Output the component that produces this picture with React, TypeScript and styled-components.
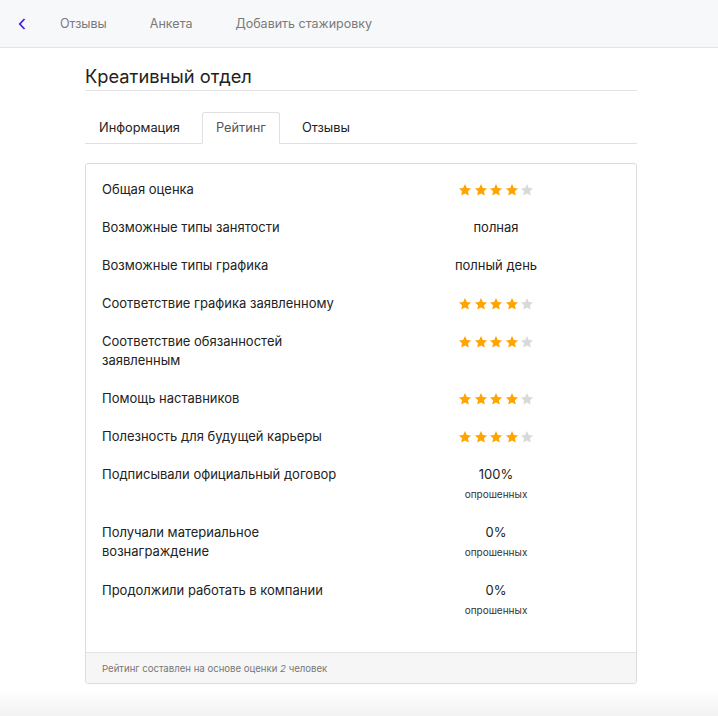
import React from "react";
import styled, { createGlobalStyle } from "styled-components";

const Global = createGlobalStyle`
  html, body { margin: 0; padding: 0; background: #fff; }
  body { font-family: Inter, "Noto Sans", sans-serif; color: #222; }
`;

const Page = styled.div`
  min-height: 716px;
  display: flex;
  flex-direction: column;
  background: linear-gradient(to bottom, #fff 0, #fff 690px, #f2f2f2 716px);
`;

const TopBar = styled.nav`
  height: 48px;
  background: #f7f8fa;
  border-bottom: 1px solid #e1e4ea;
  display: flex;
  align-items: center;
  padding-left: 16px;
  box-sizing: border-box;
`;

const BackButton = styled.button`
  border: 0;
  background: none;
  padding: 0;
  width: 12px;
  height: 16px;
  display: flex;
  align-items: center;
  justify-content: center;
  margin-right: 32px;
  cursor: pointer;
`;

const NavLink = styled.a`
  font-size: 12.5px;
  color: #7a7a7a;
  text-decoration: none;
  margin-right: 43px;
`;

const Main = styled.main`
  width: 552px;
  margin: 0 0 0 85px;
  padding-top: 16px;
`;

const Title = styled.h1`
  margin: 0;
  font-size: 18.3px;
  font-weight: 400;
  line-height: 24px;
  color: #222;
  padding-bottom: 2px;
  border-bottom: 1px solid #e3e3e3;
`;

const Tabs = styled.div`
  display: flex;
  margin-top: 21px;
  border-bottom: 1px solid #e0e0e0;
`;

const Tab = styled.div<{ $active?: boolean }>`
  font-size: 12.8px;
  line-height: 16px;
  padding: 8px 13px;
  height: 32px;
  box-sizing: border-box;
  margin-bottom: -1px;
  margin-right: 8px;
  border: 1px solid ${(p) => (p.$active ? "#e0e0e0" : "transparent")};
  border-bottom-color: ${(p) => (p.$active ? "#fff" : "transparent")};
  border-radius: 3px 3px 0 0;
  background: ${(p) => (p.$active ? "#fff" : "transparent")};
  color: ${(p) => (p.$active ? "#555" : "#222")};
  display: flex;
  align-items: center;
`;

const Card = styled.section`
  margin-top: 19px;
  border: 1px solid #dcdcdc;
  border-radius: 3px;
  overflow: hidden;
`;

const CardBody = styled.div`
  padding: 16px 16px 14px;
  display: grid;
  grid-template-columns: 244px 1fr;
  column-gap: 26px;
  row-gap: 19px;
`;

const Label = styled.div`
  font-size: 13px;
  line-height: 19px;
  color: #222;
`;

const Value = styled.div`
  font-size: 13px;
  line-height: 19px;
  color: #222;
  text-align: center;
  display: flex;
  flex-direction: column;
  align-items: center;
`;

const Sub = styled.span`
  font-size: 10px;
  line-height: 19px;
  padding-top: 1px;
  color: #333;
`;

const Stars = styled.div`
  display: flex;
  gap: 1.5px;
  height: 19px;
  align-items: center;
`;

const CardFooter = styled.footer`
  margin-top: 18px;
  background: #f6f6f6;
  border-top: 1px solid #e3e3e3;
  height: 30px;
  display: flex;
  align-items: center;
  padding-left: 16px;
  font-size: 9.6px;
  color: #777;
`;

const Star = ({ filled }: { filled: boolean }) => (
  <svg width="14" height="14" viewBox="0 0 24 24">
    <path
      d="M12 1.8l3.1 6.7 7.3.8-5.4 5 1.5 7.2L12 17.9l-6.5 3.6L7 14.3l-5.4-5 7.3-.8z"
      fill={filled ? "#ffa400" : "#d9d9d9"}
    />
  </svg>
);

const Rating = ({ value }: { value: number }) => (
  <Stars>
    {[1, 2, 3, 4, 5].map((i) => (
      <Star key={i} filled={i <= value} />
    ))}
  </Stars>
);

type Row = { label: string; stars?: number; text?: string; sub?: string };

const rows: Row[] = [
  { label: "Общая оценка", stars: 4 },
  { label: "Возможные типы занятости", text: "полная" },
  { label: "Возможные типы графика", text: "полный день" },
  { label: "Соответствие графика заявленному", stars: 4 },
  { label: "Соответствие обязанностей заявленным", stars: 4 },
  { label: "Помощь наставников", stars: 4 },
  { label: "Полезность для будущей карьеры", stars: 4 },
  { label: "Подписывали официальный договор", text: "100%", sub: "опрошенных" },
  { label: "Получали материальное вознаграждение", text: "0%", sub: "опрошенных" },
  { label: "Продолжили работать в компании", text: "0%", sub: "опрошенных" },
];

export default function App() {
  return (
    <Page>
      <Global />
      <TopBar>
        <BackButton aria-label="Назад">
          <svg width="8" height="12" viewBox="0 0 8 12">
            <path d="M6.5 1L1.8 6l4.7 5" fill="none" stroke="#4a1fe0" strokeWidth="1.8" />
          </svg>
        </BackButton>
        <NavLink>Отзывы</NavLink>
        <NavLink>Анкета</NavLink>
        <NavLink>Добавить стажировку</NavLink>
      </TopBar>
      <Main>
        <Title>Креативный отдел</Title>
        <Tabs>
          <Tab>Информация</Tab>
          <Tab $active>Рейтинг</Tab>
          <Tab>Отзывы</Tab>
        </Tabs>
        <Card>
          <CardBody>
            {rows.map((r) => (
              <React.Fragment key={r.label}>
                <Label>{r.label}</Label>
                <Value>
                  {r.stars !== undefined ? <Rating value={r.stars} /> : r.text}
                  {r.sub && <Sub>{r.sub}</Sub>}
                </Value>
              </React.Fragment>
            ))}
          </CardBody>
          <CardFooter>
            Рейтинг составлен на основе оценки&nbsp;<i>2</i>&nbsp;человек
          </CardFooter>
        </Card>
      </Main>
    </Page>
  );
}
